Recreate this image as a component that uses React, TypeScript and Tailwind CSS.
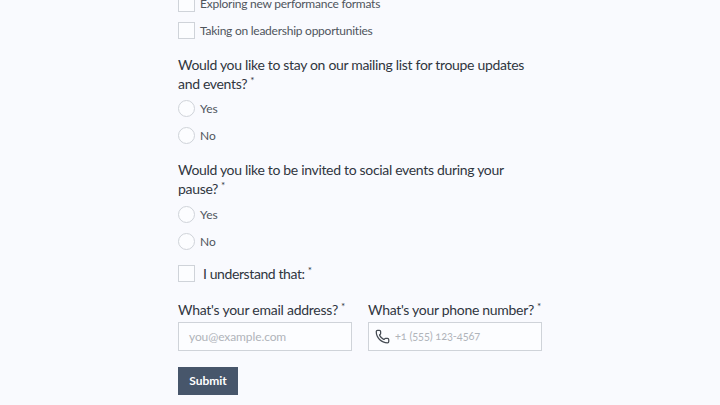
import React from "react";
import { Phone } from "lucide-react";

const font = { fontFamily: '"Lato", "Open Sans", sans-serif' };

const Check = ({ label }: { label: string }) => (
  <div className="flex items-center gap-[5px] h-[17px]">
    <span className="w-[17px] h-[17px] border border-[#cfd3d9] bg-[#fcfdff] shrink-0" />
    <span className="text-[12px] text-[#4f555d] tracking-[-0.25px] whitespace-nowrap">{label}</span>
  </div>
);

const Radio = ({ label }: { label: string }) => (
  <div className="flex items-center gap-[5px] h-[17px]">
    <span className="w-[17px] h-[17px] rounded-full border border-[#cfd3d9] bg-[#fcfdff] shrink-0" />
    <span className="text-[12px] text-[#4f555d]">{label}</span>
  </div>
);

const Star = () => <sup className="text-[10px] ml-[3px] top-[-5px]">*</sup>;

const Question = ({ text }: { text: React.ReactNode }) => (
  <p className="text-[14px] leading-[19px] text-[#30363e] tracking-[-0.32px] whitespace-nowrap">{text}</p>
);

export default function App() {
  return (
    <div className="w-[720px] h-[405px] overflow-hidden bg-[#f9fafe]" style={font}>
      <div className="w-[364px] ml-[178px] -mt-[5px] flex flex-col">
        <div className="flex flex-col gap-[10px]">
          <Check label="Exploring new performance formats" />
          <Check label="Taking on leadership opportunities" />
        </div>

        <div className="mt-[16px]">
          <Question text={<>Would you like to stay on our mailing list for troupe updates<br />and events?<Star /></>} />
        </div>
        <div className="mt-[7px] flex flex-col gap-[10px]">
          <Radio label="Yes" />
          <Radio label="No" />
        </div>

        <div className="mt-[16px]">
          <Question text={<>Would you like to be invited to social events during your<br />pause?<Star /></>} />
        </div>
        <div className="mt-[8px] flex flex-col gap-[10px]">
          <Radio label="Yes" />
          <Radio label="No" />
        </div>

        <div className="mt-[15px] flex items-center gap-[8px] h-[17px]">
          <span className="w-[17px] h-[17px] border border-[#cfd3d9] bg-[#fcfdff] shrink-0" />
          <span className="text-[14px] text-[#30363e] tracking-[-0.4px]">I understand that:<Star /></span>
        </div>

        <div className="mt-[18px] flex gap-[16px]">
          <div className="w-[174px]">
            <p className="text-[14px] leading-[19px] text-[#30363e] tracking-[-0.25px] whitespace-nowrap">What's your email address?<Star /></p>
            <div className="mt-[3px] h-[29px] border border-[#cfd3d9] bg-[#fcfdff] flex items-center px-[10px]">
              <span className="text-[12px] text-[#b0b4ba] tracking-[-0.1px]">you@example.com</span>
            </div>
          </div>
          <div className="w-[174px]">
            <p className="text-[14px] leading-[19px] text-[#30363e] tracking-[-0.3px] whitespace-nowrap">What's your phone number?<Star /></p>
            <div className="mt-[3px] h-[29px] border border-[#cfd3d9] bg-[#fcfdff] flex items-center pl-[6px] gap-[5px]">
              <Phone size={15} strokeWidth={2} className="text-[#454b53]" />
              <span className="text-[11px] text-[#b0b4ba] tracking-[-0.1px] oldstyle-nums">+1 (555) 123-4567</span>
            </div>
          </div>
        </div>

        <button className="mt-[16px] w-[60px] h-[28px] bg-[#47566b] text-white text-[12px] font-bold flex items-center justify-center">
          Submit
        </button>
      </div>
    </div>
  );
}
